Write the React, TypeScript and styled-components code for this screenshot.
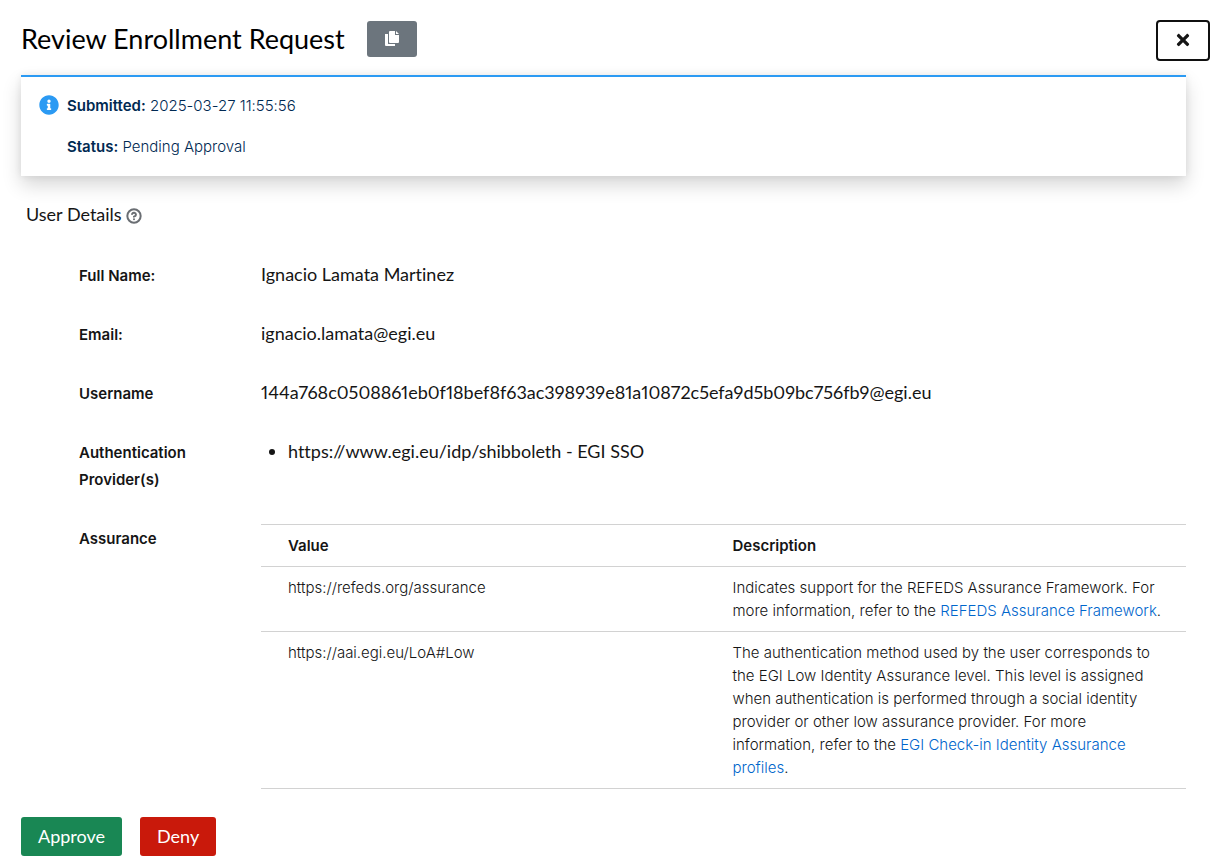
import React from "react";
import styled, { createGlobalStyle } from "styled-components";
import { FaInfoCircle, FaTimes } from "react-icons/fa";
import { CircleQuestionMark } from "lucide-react";

const displayFont = `Lato, "Liberation Sans", sans-serif`;
const textFont = `Inter, "Liberation Sans", sans-serif`;

const GlobalStyle = createGlobalStyle`
  *, *::before, *::after { box-sizing: border-box; }
  body {
    margin: 0;
    background: #fff;
    color: #151515;
    font-family: ${textFont};
    font-size: 15px;
    font-weight: 300;
    font-variant-ligatures: none;
    line-height: 23px;
  }
  button { font-family: inherit; cursor: pointer; }
`;

const Page = styled.main`
  padding: 20px 26px 8px 21px;
`;

const Header = styled.header`
  display: flex;
  align-items: flex-start;
  margin-right: -24px;
`;

const Title = styled.h1`
  margin: 0;
  font-family: ${displayFont};
  font-size: 27px;
  font-weight: 400;
  line-height: 37px;
  color: #000;
`;

const CopyButton = styled.button`
  display: flex;
  align-items: center;
  justify-content: center;
  width: 50px;
  height: 36px;
  margin: 1px 0 0 22px;
  padding: 0;
  border: 0;
  border-radius: 3px;
  background: #6c757d;
  color: #fff;
`;

const CloseButton = styled.button`
  display: flex;
  align-items: center;
  justify-content: center;
  width: 54px;
  height: 41px;
  margin-left: auto;
  padding: 0 0 2px;
  border: 2px solid #101010;
  border-radius: 4px;
  background: #fff;
  color: #151515;
  font-size: 18px;
`;

const Notice = styled.section`
  display: flex;
  gap: 8px;
  margin-top: 14px;
  padding: 17px 18px 18px;
  border-top: 2px solid #2b9af3;
  background: #fff;
  box-shadow: 0 9px 18px rgba(3, 3, 3, 0.16), 0 0 7px rgba(3, 3, 3, 0.08);
  color: #002952;
`;

const NoticeIcon = styled.span`
  display: flex;
  padding-top: 1px;
  color: #2b9af3;
  font-size: 20px;
`;

const NoticeLines = styled.div`
  display: flex;
  flex-direction: column;
  gap: 18px;

  p { margin: 0; }
  strong { font-weight: 600; }
`;

const SectionTitle = styled.h2`
  display: flex;
  align-items: center;
  gap: 4px;
  margin: 25px 0 0 5px;
  font-family: ${displayFont};
  font-size: 18px;
  font-weight: 400;
  line-height: 27px;
`;

const HelpButton = styled.button`
  display: flex;
  padding: 2px 0 0;
  border: 0;
  background: none;
  color: #6a6e73;
`;

const Details = styled.dl`
  display: grid;
  grid-template-columns: 155px minmax(0, 1fr);
  column-gap: 27px;
  row-gap: 31px;
  margin: 33px 0 0 58px;
  line-height: 27px;
`;

const Label = styled.dt`
  padding-top: 1px;
  font-weight: 600;
`;

const Value = styled.dd`
  margin: 0;
  font-family: ${displayFont};
  font-size: 18px;
  font-weight: 400;
  font-variant-numeric: proportional-nums;
  overflow-wrap: anywhere;
`;

const Providers = styled.ul`
  margin: 0;
  padding-left: 27px;
`;

const AssuranceTable = styled.table`
  width: 100%;
  border-collapse: separate;
  border-spacing: 0;
  border-top: 1px solid #d2d2d2;
  table-layout: fixed;
  font-family: ${textFont};
  font-size: 15px;
  font-weight: 300;
  line-height: 23px;
  text-align: left;
`;

const cell = `
  padding: 9px;
  border-bottom: 1px solid #d2d2d2;
  vertical-align: top;
  &:first-child { padding-left: 27px; }
  &:last-child { padding-right: 20px; }
`;

const HeadCell = styled.th`
  ${cell}
  font-weight: 600;
`;

const Cell = styled.td`
  ${cell}
`;

const Link = styled.a`
  color: #06c;
  text-decoration: none;
`;

const Actions = styled.div`
  display: flex;
  gap: 18px;
  margin-top: 28px;
`;

const ActionButton = styled.button<{ $color: string }>`
  height: 39px;
  padding: 0 17px;
  border: 0;
  border-radius: 3px;
  background: ${(p) => p.$color};
  color: #fff;
  font-family: ${displayFont};
  font-size: 18px;
  line-height: 27px;
`;

const CopyIcon = () => (
  <svg width="14" height="16" viewBox="0 0 14 16" fill="currentColor" aria-hidden="true">
    <path d="M0 3h3v9.500q0 .5.500.500H10v2H1q-1 0-1-1z" />
    <path d="M5 0h5v4h4v7q0 1-1 1H5q-1 0-1-1V1q0-1 1-1zM11 0l3 3h-3z" />
  </svg>
);

export default function App() {
  return (
    <>
      <GlobalStyle />
      <Page>
        <Header>
          <Title>Review Enrollment Request</Title>
          <CopyButton type="button" aria-label="Copy link">
            <CopyIcon />
          </CopyButton>
          <CloseButton type="button" aria-label="Close">
            <FaTimes />
          </CloseButton>
        </Header>

        <Notice>
          <NoticeIcon>
            <FaInfoCircle />
          </NoticeIcon>
          <NoticeLines>
            <p><strong>Submitted:</strong> 2025-03-27 11:55:56</p>
            <p><strong>Status:</strong> Pending Approval</p>
          </NoticeLines>
        </Notice>

        <SectionTitle>
          User Details
          <HelpButton type="button" aria-label="About user details">
            <CircleQuestionMark size={16} strokeWidth={3} />
          </HelpButton>
        </SectionTitle>

        <Details>
          <Label>Full Name:</Label>
          <Value>Ignacio Lamata Martinez</Value>
          <Label>Email:</Label>
          <Value>ignacio.lamata@egi.eu</Value>
          <Label>Username</Label>
          <Value>144a768c0508861eb0f18bef8f63ac398939e81a10872c5efa9d5b09bc756fb9@egi.eu</Value>
          <Label>Authentication Provider(s)</Label>
          <Value>
            <Providers>
              <li>https://www.egi.eu/idp/shibboleth - EGI SSO</li>
            </Providers>
          </Value>
          <Label>Assurance</Label>
          <Value>
            <AssuranceTable>
              <thead>
                <tr>
                  <HeadCell scope="col">Value</HeadCell>
                  <HeadCell scope="col">Description</HeadCell>
                </tr>
              </thead>
              <tbody>
                <tr>
                  <Cell>https://refeds.org/assurance</Cell>
                  <Cell>
                    Indicates support for the REFEDS Assurance Framework. For more information, refer to
                    the <Link href="#refeds">REFEDS Assurance Framework</Link>.
                  </Cell>
                </tr>
                <tr>
                  <Cell>https://aai.egi.eu/LoA#Low</Cell>
                  <Cell>
                    The authentication method used by the user corresponds to the EGI Low Identity
                    Assurance level. This level is assigned when authentication is performed through a
                    social identity provider or other low assurance provider. For more information,
                    refer to the <Link href="#profiles">EGI Check-in Identity Assurance profiles</Link>.
                  </Cell>
                </tr>
              </tbody>
            </AssuranceTable>
          </Value>
        </Details>

        <Actions>
          <ActionButton type="button" $color="#198754">Approve</ActionButton>
          <ActionButton type="button" $color="#c9190b">Deny</ActionButton>
        </Actions>
      </Page>
    </>
  );
}
